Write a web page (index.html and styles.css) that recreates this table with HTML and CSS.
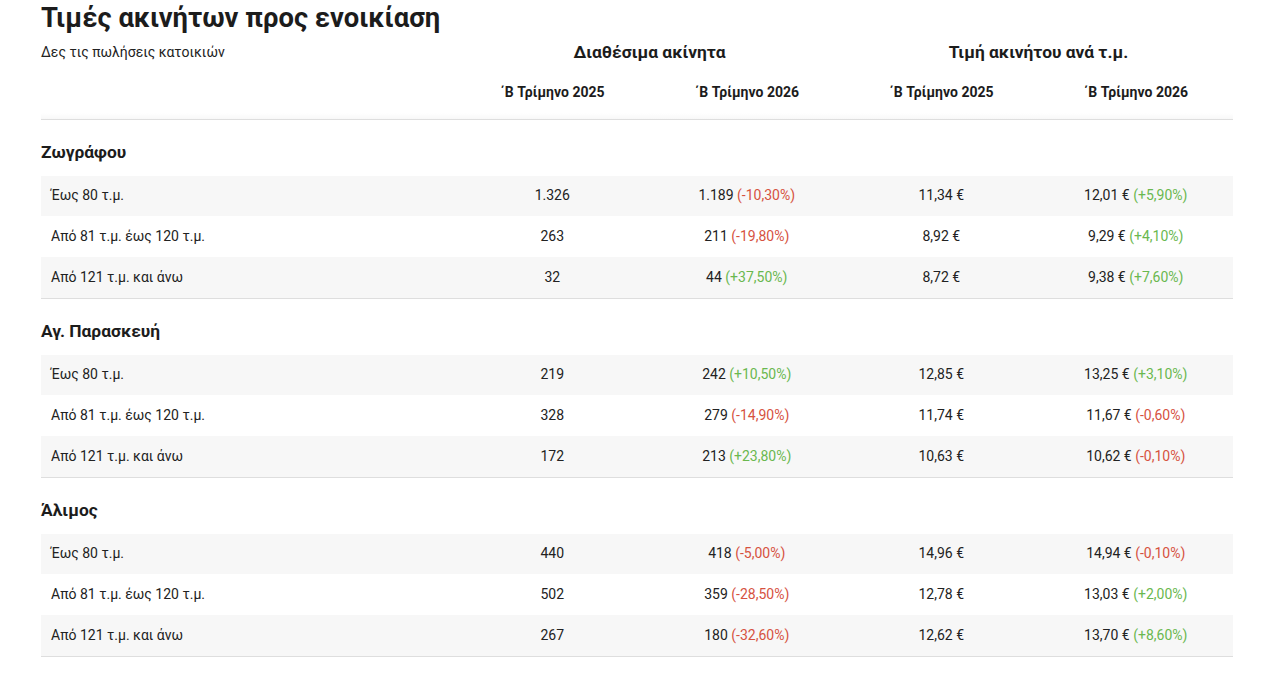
FILE: index.html
```html
<!DOCTYPE html>
<html lang="el">
<head>
<meta charset="utf-8">
<title>Τιμές ακινήτων προς ενοικίαση</title>
<link rel="stylesheet" href="styles.css">
</head>
<body>
<div class="page">
  <h1 class="title">Τιμές ακινήτων προς ενοικίαση</h1>
  <table class="prices">
    <colgroup>
      <col class="c-label"><col class="c-num"><col class="c-num"><col class="c-num"><col class="c-num">
    </colgroup>
    <thead>
      <tr class="h-group">
        <th class="sub"><a href="#">Δες τις πωλήσεις κατοικιών</a></th>
        <th colspan="2">Διαθέσιμα ακίνητα</th>
        <th colspan="2">Τιμή ακινήτου ανά τ.μ.</th>
      </tr>
      <tr class="h-quarter">
        <th></th>
        <th>΄Β Τρίμηνο 2025</th>
        <th>΄Β Τρίμηνο 2026</th>
        <th>΄Β Τρίμηνο 2025</th>
        <th>΄Β Τρίμηνο 2026</th>
      </tr>
    </thead>
    <tbody class="area">
      <tr class="area-name"><th colspan="5">Ζωγράφου</th></tr>
      <tr class="odd first"><td>Έως 80 τ.μ.</td><td>1.326</td><td>1.189 <span class="neg">(-10,30%)</span></td><td>11,34 €</td><td>12,01 € <span class="pos">(+5,90%)</span></td></tr>
      <tr><td>Από 81 τ.μ. έως 120 τ.μ.</td><td>263</td><td>211 <span class="neg">(-19,80%)</span></td><td>8,92 €</td><td>9,29 € <span class="pos">(+4,10%)</span></td></tr>
      <tr class="odd last"><td>Από 121 τ.μ. και άνω</td><td>32</td><td>44 <span class="pos">(+37,50%)</span></td><td>8,72 €</td><td>9,38 € <span class="pos">(+7,60%)</span></td></tr>
    </tbody>
    <tbody class="area">
      <tr class="area-name"><th colspan="5">Αγ. Παρασκευή</th></tr>
      <tr class="odd first"><td>Έως 80 τ.μ.</td><td>219</td><td>242 <span class="pos">(+10,50%)</span></td><td>12,85 €</td><td>13,25 € <span class="pos">(+3,10%)</span></td></tr>
      <tr><td>Από 81 τ.μ. έως 120 τ.μ.</td><td>328</td><td>279 <span class="neg">(-14,90%)</span></td><td>11,74 €</td><td>11,67 € <span class="neg">(-0,60%)</span></td></tr>
      <tr class="odd last"><td>Από 121 τ.μ. και άνω</td><td>172</td><td>213 <span class="pos">(+23,80%)</span></td><td>10,63 €</td><td>10,62 € <span class="neg">(-0,10%)</span></td></tr>
    </tbody>
    <tbody class="area">
      <tr class="area-name"><th colspan="5">Άλιμος</th></tr>
      <tr class="odd first"><td>Έως 80 τ.μ.</td><td>440</td><td>418 <span class="neg">(-5,00%)</span></td><td>14,96 €</td><td>14,94 € <span class="neg">(-0,10%)</span></td></tr>
      <tr><td>Από 81 τ.μ. έως 120 τ.μ.</td><td>502</td><td>359 <span class="neg">(-28,50%)</span></td><td>12,78 €</td><td>13,03 € <span class="pos">(+2,00%)</span></td></tr>
      <tr class="odd last"><td>Από 121 τ.μ. και άνω</td><td>267</td><td>180 <span class="neg">(-32,60%)</span></td><td>12,62 €</td><td>13,70 € <span class="pos">(+8,60%)</span></td></tr>
    </tbody>
  </table>
</div>
</body>
</html>
```

FILE: styles.css
```css
html, body {
  margin: 0;
  padding: 0;
  background: #fff;
}
body {
  font-family: Roboto, "Noto Sans", "Liberation Sans", sans-serif;
  color: #222;
}
.page {
  padding: 0 33px 0 41px;
}
.title {
  margin: 0;
  padding-top: 2px;
  font-size: 27.4px;
  line-height: 32px;
  font-weight: 700;
  color: #1c1c1c;
  letter-spacing: 0;
}
.prices {
  width: 1192px;
  border-collapse: collapse;
  table-layout: fixed;
}
.c-label { width: 414px; }
.c-num { width: 194.5px; }

.h-group th {
  height: 36px;
  padding: 0;
  font-size: 17.4px;
  font-weight: 700;
  color: #1c1c1c;
  text-align: center;
  vertical-align: middle;
}
.h-group th.sub {
  text-align: left;
  font-size: 14px;
  font-weight: 400;
}
.sub a {
  color: #222;
  text-decoration: none;
}
.h-quarter th {
  height: 44px;
  padding: 0 0 5px;
  font-size: 14px;
  font-weight: 700;
  color: #1c1c1c;
  text-align: center;
  vertical-align: middle;
  border-bottom: 1px solid #dedede;
  background: linear-gradient(to bottom, #fff 0, #fff 43px, #f8f8f8 49px);
}
.area-name th {
  height: 48px;
  padding: 8px 0 0;
  text-align: left;
  font-size: 17.4px;
  font-weight: 700;
  color: #1c1c1c;
  vertical-align: middle;
}
.prices td {
  height: 39px;
  padding: 0 0 2px;
  font-size: 14px;
  color: #222;
  text-align: center;
  vertical-align: middle;
}
.prices tr.first td {
  height: 38px;
}
.prices td:first-child {
  text-align: left;
  padding-left: 10px;
}
tr.odd td {
  background: #f7f7f7;
}
tr.last td {
  border-bottom: 1px solid #dedede;
}
.neg { color: #d6523f; }
.pos { color: #6ab84f; }
```
